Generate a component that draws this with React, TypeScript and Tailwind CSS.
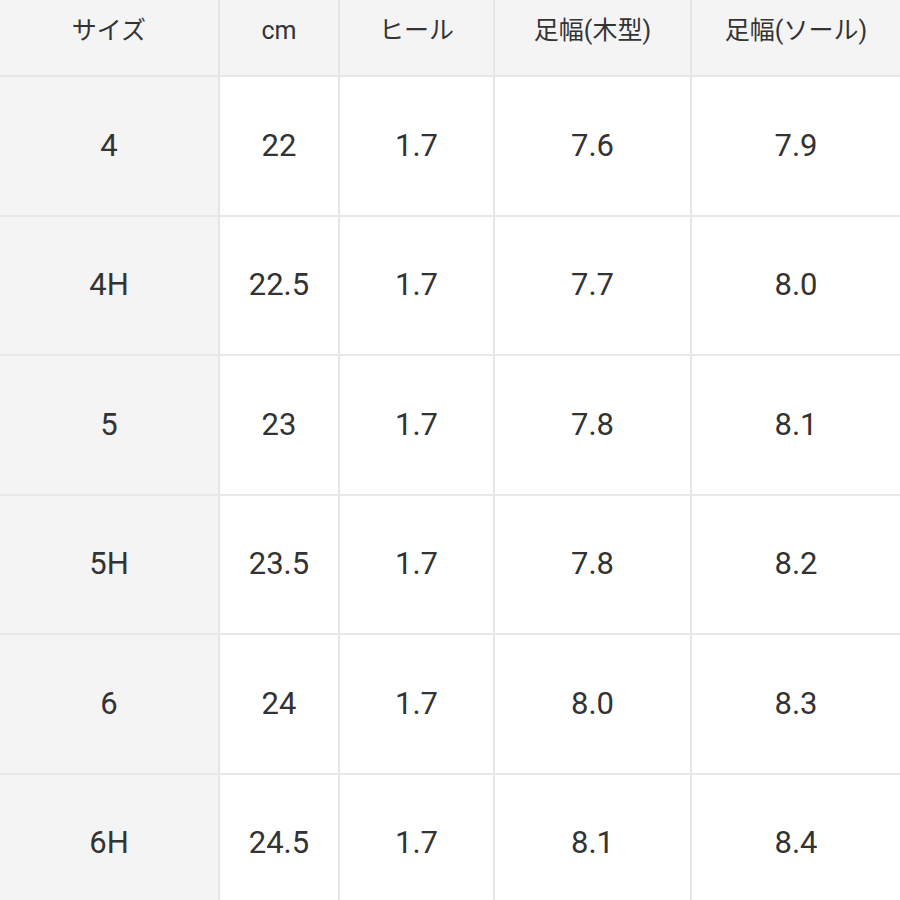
const headers = ["サイズ", "cm", "ヒール", "足幅(木型)", "足幅(ソール)"];

const rows = [
  ["4", "22", "1.7", "7.6", "7.9"],
  ["4H", "22.5", "1.7", "7.7", "8.0"],
  ["5", "23", "1.7", "7.8", "8.1"],
  ["5H", "23.5", "1.7", "7.8", "8.2"],
  ["6", "24", "1.7", "8.0", "8.3"],
  ["6H", "24.5", "1.7", "8.1", "8.4"],
];

const cols = "grid grid-cols-[220px_120px_155px_197px_1fr]";

export default function App() {
  return (
    <div
      className="h-[900px] w-[900px] overflow-hidden bg-white text-[#333333]"
      style={{ fontFamily: 'Roboto, "Noto Sans CJK JP", sans-serif' }}
    >
      {/* Header */}
      <div className={`${cols} h-[77px] bg-[#f4f4f4] border-b-2 border-[#e6e6e6]`}>
        {headers.map((h, i) => (
          <div
            key={h}
            className={`flex items-center justify-center pb-[13px] text-[25px] ${
              i < headers.length - 1 ? "border-r-2 border-[#e6e6e6]" : ""
            }`}
          >
            {h}
          </div>
        ))}
      </div>

      {/* Body */}
      {rows.map((r) => (
        <div key={r[0]} className={`${cols} h-[139.5px] border-b-2 border-[#e8e8e8]`}>
          {r.map((v, i) => (
            <div
              key={i}
              className={`flex items-center justify-center text-[31px] ${
                i === 0 ? "bg-[#f4f4f4]" : "bg-white"
              } ${i < r.length - 1 ? "border-r-2 border-[#e6e6e6]" : ""}`}
            >
              {v}
            </div>
          ))}
        </div>
      ))}
    </div>
  );
}
